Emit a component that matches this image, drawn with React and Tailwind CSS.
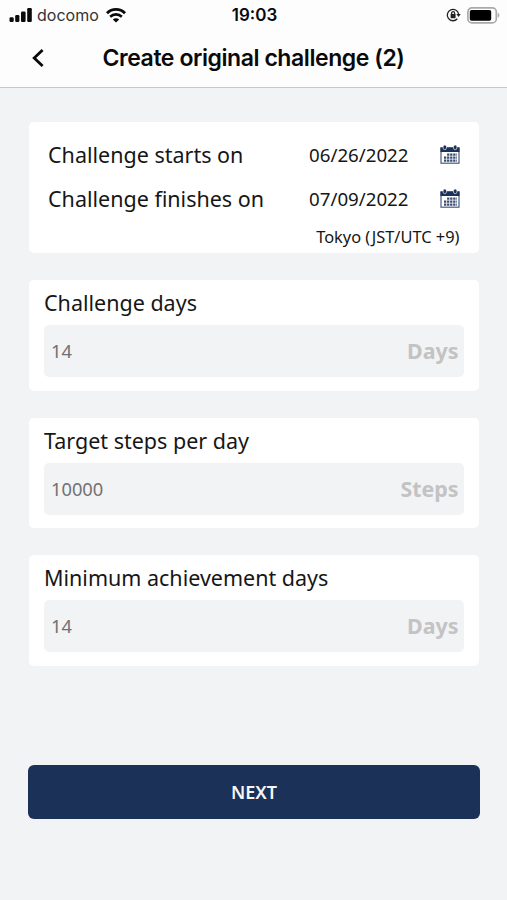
import { useState } from "react";

const SignalIcon = () => (
    <svg className="w-[23px] h-[15px]" viewBox="0 0 23 15" fill="#0a0a0a">
        <rect x="0.5" y="9.3" width="4.2" height="4.7" rx="1.2" />
        <rect x="6.2" y="7" width="4.2" height="7" rx="1.2" />
        <rect x="12" y="3.6" width="4.6" height="10.4" rx="1.2" />
        <rect x="18.2" y="0" width="4.6" height="14" rx="1.2" />
    </svg>
);

const WifiIcon = () => (
    <svg className="w-5 h-[15px]" viewBox="0 0 20 15" fill="none" stroke="#0a0a0a">
        <path d="M1 5.2C6 .2 14 .2 19 5.2" strokeWidth="2.8" />
        <path d="M4.2 8.8c3.3-3.2 8.3-3.2 11.6 0" strokeWidth="2.7" />
        <path d="M10 14.6l-3.2-3.2c1.8-1.7 4.6-1.7 6.4 0z" fill="#0a0a0a" stroke="none" />
    </svg>
);

const RotationLockIcon = () => (
    <svg className="w-[15px] h-[14px]" viewBox="0 0 15 14" fill="none" stroke="#222">
        <path d="M11.3 10.8A5.7 5.7 0 1 1 12.6 6" strokeWidth="1.3" />
        <path d="M10.3 6h4.4l-2.1 3z" fill="#222" stroke="none" />
        <rect x="4.6" y="6" width="5" height="4.2" rx=".6" fill="#222" stroke="none" />
        <path d="M5.6 6.5V5.2a1.5 1.5 0 0 1 3 0v1.3" strokeWidth="1.3" />
    </svg>
);

const BatteryIcon = () => (
    <svg className="w-[33px] h-[17px]" viewBox="0 0 33 17">
        <rect x="0.9" y="0.9" width="28.4" height="15" rx="4" fill="none" stroke="#aaa" strokeWidth="1.7" />
        <rect x="2.8" y="3" width="21.4" height="10.8" rx="1.8" fill="#000" />
        <path d="M30.7 5.8c2.2.7 2.2 4.3 0 5z" fill="#aaa" />
    </svg>
);

const CalendarIcon = () => (
    <svg className="w-5 h-[19px]" viewBox="0 0 20 19" fill="none">
        <rect x="1" y="3" width="18" height="15.2" stroke="#4a5d80" strokeWidth="1.2" fill="#fff" />
        <rect x="0.5" y="2.4" width="19" height="4.6" fill="#1b3157" />
        <rect x="3.1" y="0" width="3.4" height="4.7" rx="1.7" fill="#1b3157" stroke="#fff" strokeWidth=".6" />
        <rect x="13.5" y="0" width="3.4" height="4.7" rx="1.7" fill="#1b3157" stroke="#fff" strokeWidth=".6" />
        <path d="M7.1 9.6h9.8M4 12.6h12.9M4 15.6h12.9" stroke="#3a4c70" strokeWidth="2.2" strokeDasharray="2.3 .75" />
    </svg>
);

const DateRow = ({ label, value }) => (
    <div className="flex h-11 items-center pl-[19px] pr-[19px]">
        <span className="text-[21.5px] leading-7">{label}</span>
        <span className="ml-auto text-[18.7px] leading-7">{value}</span>
        <button className="ml-[31px]" aria-label={label}>
            <CalendarIcon />
        </button>
    </div>
);

const Field = ({ label, value, unit, onChange }) => (
    <label className="block h-[110.5px] rounded-[5px] bg-white px-[15px] pt-2">
        <span className="block h-[37px] text-[21.5px] leading-[30px]">{label}</span>
        <span className="flex h-[52px] items-center rounded-[5px] bg-[#f2f3f5] pl-[7px] pr-[5px]">
            <input
                className="w-0 flex-1 bg-transparent text-[18.3px] text-[#717173] outline-none"
                value={value}
                onChange={(e) => onChange(e.target.value)}
            />
            <span className="pt-px text-[21.4px] font-bold text-[#c3c3c4]">{unit}</span>
        </span>
    </label>
);

export default function App() {
    const [days, setDays] = useState("14");
    const [steps, setSteps] = useState("10000");
    const [minDays, setMinDays] = useState("14");

    return (
        <div className="h-[900px] w-[507px] overflow-hidden whitespace-nowrap bg-[#f2f3f5] font-['Noto_Sans',sans-serif] text-[#161616]">
            <header className="h-[88px] border-b border-[#c9c9cb] bg-[#fdfdfd] font-[Inter,sans-serif] text-[#0a0a0a]">
                <div className="grid h-[30px] grid-cols-[1fr_auto_1fr] items-center pl-[9px] pr-[7px]">
                    <div className="flex items-center">
                        <SignalIcon />
                        <span className="ml-[5px] mr-[7px] text-[16px] leading-5 text-[#333]">docomo</span>
                        <WifiIcon />
                    </div>
                    <span className="text-[17px] font-semibold leading-5">19:03</span>
                    <div className="flex items-center justify-end gap-1.5">
                        <RotationLockIcon />
                        <BatteryIcon />
                    </div>
                </div>
                <div className="grid h-[55px] grid-cols-[60px_1fr_60px] items-center">
                    <button className="ml-8" aria-label="Back">
                        <svg className="h-5 w-3" viewBox="0 0 12 20" fill="none" stroke="#0a0a0a" strokeWidth="2.8">
                            <path d="M10.6 2L2.2 10l8.4 8" />
                        </svg>
                    </button>
                    <h1 className="text-center text-[23px] font-semibold leading-7 tracking-[-0.43px]">
                        Create original challenge (2)
                    </h1>
                </div>
            </header>

            <main className="flex flex-col gap-[27px] pl-[29px] pr-[28.5px] pt-[33.5px]">
                <section className="h-[131.5px] rounded-[5px] bg-white pt-[11px]">
                    <DateRow label="Challenge starts on" value="06/26/2022" />
                    <DateRow label="Challenge finishes on" value="07/09/2022" />
                    <p className="pr-[19px] text-right text-[16.4px] leading-8">Tokyo (JST/UTC +9)</p>
                </section>
                <Field label="Challenge days" value={days} unit="Days" onChange={setDays} />
                <Field label="Target steps per day" value={steps} unit="Steps" onChange={setSteps} />
                <Field label="Minimum achievement days" value={minDays} unit="Days" onChange={setMinDays} />
            </main>

            <button className="ml-7 mt-[99.5px] block h-[54px] w-[452px] rounded-md bg-[#1b3157] text-[18px] font-semibold text-[#f5f6f8]">
                NEXT
            </button>
        </div>
    );
}
